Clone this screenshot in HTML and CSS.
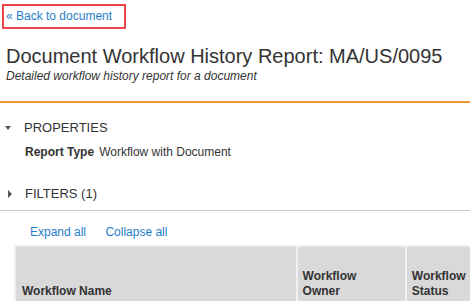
FILE: index.html
```html
<!DOCTYPE html>
<html lang="en">
<head>
    <meta charset="UTF-8">
    <title>Document Workflow History Report</title>
    <link rel="stylesheet" href="styles.css">
</head>
<body>
<div class="page">
    <a class="back" href="#">&laquo; Back to document</a>

    <div class="header">
        <h1>Document Workflow History Report: MA/US/0095</h1>
        <p class="subtitle">Detailed workflow history report for a document</p>
    </div>

    <div class="section">
        <div class="section-title"><span class="caret caret-down"></span>PROPERTIES</div>
        <div class="prop"><b>Report Type</b>Workflow with Document</div>
    </div>

    <div class="section section-filters">
        <div class="section-title"><span class="caret caret-right"></span>FILTERS (1)</div>
    </div>

    <div class="results">
        <div class="tools">
            <a href="#">Expand all</a>
            <a href="#">Collapse all</a>
        </div>
        <table class="grid" cellspacing="0">
            <tr>
                <th class="col-name">Workflow Name</th>
                <th class="col-owner">Workflow Owner</th>
                <th class="col-status">Workflow Status</th>
            </tr>
        </table>
    </div>
</div>
</body>
</html>
```

FILE: styles.css
```css
html,body{
    margin:0;
    padding:0;
    background:#fff;
    font-family:"Liberation Sans",Arial,sans-serif;
    color:#333;
}
.page{
    padding:4px 0 0 2px;
    overflow:hidden;
}
a{
    color:#1f7ecb;
    text-decoration:none;
}
.back{
    display:inline-block;
    border:2px solid #f0444c;
    padding:2px 12px 2px 2px;
    font-size:12px;
    line-height:17px;
}
.header{
    margin-left:-2px;
    padding:14px 0 18px 6px;
    border-bottom:2px solid #f0962e;
}
h1{
    margin:0;
    font-size:20px;
    font-weight:normal;
    line-height:26px;
    white-space:nowrap;
    color:#333;
}
.subtitle{
    margin:0;
    font-size:12px;
    font-style:italic;
    line-height:14px;
}
.section{
    margin-left:-2px;
    padding:16px 0 0 0;
}
.section-title{
    font-size:13px;
    line-height:18px;
    display:flex;
    align-items:center;
}
.caret{
    width:0;
    height:0;
}
.caret-down{
    border-left:3.5px solid transparent;
    border-right:3.5px solid transparent;
    border-top:4px solid #555;
    margin-left:5px;
    margin-right:13px;
}
.caret-right{
    border-top:4px solid transparent;
    border-bottom:4px solid transparent;
    border-left:4px solid #555;
    margin-left:8px;
    margin-right:13px;
}
.prop{
    font-size:12px;
    padding:8px 0 0 25px;
}
.prop b{
    margin-right:5px;
}
.section-filters{
    padding-top:26px;
    padding-bottom:7px;
    border-bottom:1px solid #ccc;
}
.results{
    margin-left:-2px;
    padding:14px 0 0 14px;
}
.tools{
    font-size:12px;
    padding:0 0 6px 16px;
}
.tools a{
    margin-right:16px;
}
.grid{
    border:2px solid #eee;
    border-collapse:collapse;
    table-layout:fixed;
    width:485px;
}
.grid th{
    background:#d9d9d9;
    font-size:12px;
    text-align:left;
    vertical-align:bottom;
    padding:0 5px 4px 6px;
    height:52px;
    border-left:2px solid #f0f0f0;
    line-height:15px;
}
.col-name{
    width:268px;
}
.grid th.col-owner,
.grid th.col-status{
    padding-left:5px;
    padding-right:30px;
}
.col-owner{
    width:72px;
}
.col-status{
    width:55px;
}
```
